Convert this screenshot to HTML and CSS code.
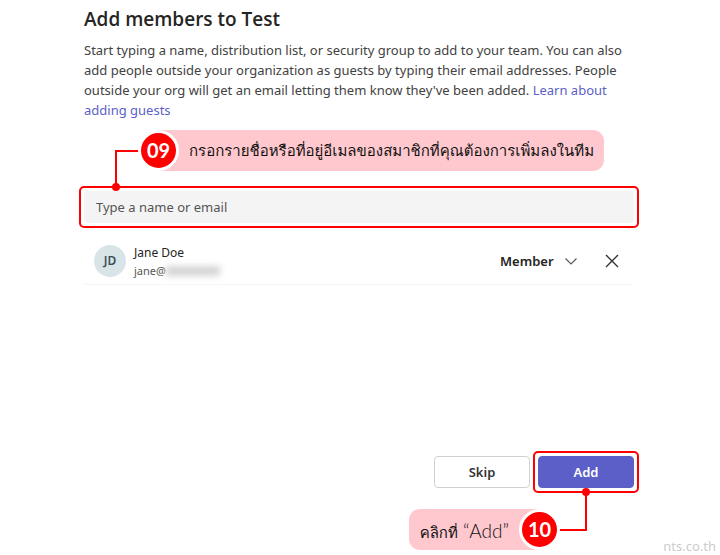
FILE: index.html
```
<!DOCTYPE html>
<html lang="en">
<head>
    <meta charset="UTF-8">
    <meta name="viewport" content="width=device-width, initial-scale=1.0">
    <title>Add members to Test</title>
    <link rel="stylesheet" href="styles.css">
</head>
<body>
    <main class="dialog">
        <h1>Add members to Test</h1>
        <p class="intro">Start typing a name, distribution list, or security group to add to your team. You can also add people outside your organization as guests by typing their email addresses. People outside your org will get an email letting them know they've been added. <a href="#">Learn about adding guests</a></p>

        <!-- Step 09 -->
        <div class="callout callout-search">
            <span class="step">09</span>
            <p class="note" lang="th">กรอกรายชื่อหรือที่อยู่อีเมลของสมาชิกที่คุณต้องการเพิ่มลงในทีม</p>
            <span class="line line-search"></span>
        </div>

        <div class="highlight highlight-search">
            <input type="text" class="search" placeholder="Type a name or email" aria-label="Type a name or email">
        </div>

        <ul class="members">
            <li class="member">
                <span class="avatar">JD</span>
                <div class="info">
                    <div class="name">Jane Doe</div>
                    <div class="email">jane@<span class="hidden-part"></span></div>
                </div>
                <div class="role">
                    <select class="role-select" aria-label="Role">
                        <option>Member</option>
                        <option>Owner</option>
                    </select>
                    <svg class="chevron" width="14" height="14" viewBox="0 0 14 14" aria-hidden="true">
                        <path d="M1.500 4.500 7 10l5.500-5.500" fill="none" stroke="#555" stroke-width="1.100"/>
                    </svg>
                </div>
                <button type="button" class="remove" aria-label="Remove Jane Doe">
                    <svg width="14" height="14" viewBox="0 0 14 14" aria-hidden="true">
                        <path d="M1 1l12 12M13 1 1 13" fill="none" stroke="#333" stroke-width="1.400"/>
                    </svg>
                </button>
            </li>
        </ul>

        <div class="actions">
            <button type="button" class="btn">Skip</button>
            <div class="highlight">
                <button type="button" class="btn btn-primary">Add</button>
            </div>
        </div>

        <!-- Step 10 -->
        <div class="callout callout-add">
            <p class="note" lang="th">คลิกที่ <span class="quoted">“Add”</span></p>
            <span class="step">10</span>
            <span class="line line-add"></span>
        </div>
    </main>
    <div class="watermark">nts.co.th</div>
</body>
</html>
```
FILE: styles.css
```
* {
    box-sizing: border-box;
}

body {
    margin: 0;
    background: #fff;
    color: #252423;
    font-family: "Noto Sans", "Open Sans", sans-serif;
    font-size: 13px;
}

.dialog {
    display: flex;
    flex-direction: column;
    min-height: 100vh;
    padding: 6px 86px 5px 84px;
}

h1 {
    margin: 0 0 8px;
    font-family: "Open Sans", sans-serif;
    font-size: 19px;
    font-weight: 600;
    line-height: 26px;
}

.intro {
    margin: 0 0 10px;
    color: #424242;
    line-height: 20px;
}

a {
    color: #5b5fc7;
    text-decoration: none;
}

/* Callouts */
.callout {
    position: relative;
    display: flex;
    align-items: center;
    height: 41px;
}

.callout-search {
    align-self: flex-start;
    margin: 0 0 15px 54px;
}

.callout-add {
    align-self: flex-end;
    margin: 16px 74px 0 0;
}

.note {
    height: 41px;
    margin: 0;
    background: #ffc8ce;
    color: #111;
    font-family: "Loma", "Garuda", "Noto Sans Thai Looped", "Noto Serif Thai", sans-serif;
    font-size: 15px;
    line-height: 43px;
    white-space: nowrap;
}

.callout-search .note {
    margin-left: -20px;
    padding: 0 10px 0 30px;
    border-radius: 0 11px 11px 0;
}

.callout-add .note {
    margin-right: -20px;
    padding: 0 30px 0 11px;
    border-radius: 11px 0 0 11px;
}

.quoted {
    font-family: "Lato", sans-serif;
    font-size: 19px;
    font-weight: 300;
}

.step {
    z-index: 1;
    flex: none;
    width: 41px;
    height: 41px;
    border: 3px solid #fff;
    border-radius: 50%;
    background: #f00;
    color: #fff;
    font-family: "Lato", sans-serif;
    font-size: 20px;
    font-weight: 700;
    line-height: 35px;
    text-align: center;
}

.line {
    position: absolute;
    border: 0 solid #f00;
}

.line-search {
    top: 20px;
    left: -23px;
    width: 24px;
    height: 36px;
    border-width: 2px 0 0 2px;
}

.line-add {
    right: -27px;
    bottom: 19px;
    width: 28px;
    height: 39px;
    border-width: 0 2px 2px 0;
}

/* Dot at the end of each line */
.line::after {
    content: "";
    position: absolute;
    width: 8px;
    height: 8px;
    border-radius: 50%;
    background: #f00;
}

.line-search::after {
    bottom: -5px;
    left: -5px;
}

.line-add::after {
    top: -4px;
    right: -5px;
}

.highlight {
    padding: 3px;
    border: 2px solid #f00;
    border-radius: 5px;
}

.highlight-search {
    margin: 0 -5px;
}

.search {
    display: block;
    width: 100%;
    height: 32px;
    padding: 0 12px;
    border: 0;
    border-radius: 4px;
    background: #f4f4f4;
    color: #252423;
    font: inherit;
}

.search::placeholder {
    color: #555;
}

/* Members list */
.members {
    flex: 1;
    margin: 9px 2px 0 0;
    padding: 0;
    list-style: none;
}

.member {
    display: flex;
    align-items: center;
    height: 48px;
    padding: 0 13px 0 10px;
    border-bottom: 1px solid #f5f5f5;
}

.avatar {
    width: 32px;
    height: 32px;
    margin-right: 8px;
    border-radius: 50%;
    background: #d8e4e8;
    color: #3b4f57;
    font-size: 12px;
    font-weight: 600;
    line-height: 32px;
    text-align: center;
}

.info {
    flex: 1;
    padding-top: 3px;
}

.name {
    font-size: 12px;
    line-height: 18px;
}

.email {
    display: flex;
    align-items: center;
    color: #555;
    font-size: 11px;
    line-height: 18px;
}

.hidden-part {
    width: 54px;
    height: 10px;
    background: #d5d5d5;
    filter: blur(3px);
}

.role {
    display: flex;
    align-items: center;
    gap: 10px;
}

.role-select {
    appearance: none;
    padding: 0;
    border: 0;
    background: none;
    color: #252423;
    font: inherit;
    font-weight: 600;
}

.remove {
    display: flex;
    margin-left: 27px;
    padding: 0;
    border: 0;
    background: none;
    cursor: pointer;
}

/* Buttons */
.actions {
    display: flex;
    align-items: center;
    justify-content: flex-end;
    gap: 3px;
    margin-right: -5px;
}

.btn {
    display: block;
    width: 96px;
    height: 32px;
    padding: 0;
    border: 1px solid #d1d1d1;
    border-radius: 4px;
    background: #fff;
    color: #333;
    font: inherit;
    font-weight: 600;
    cursor: pointer;
}

.btn-primary {
    border-color: #5b5fc7;
    background: #5b5fc7;
    color: #fff;
}

.watermark {
    position: absolute;
    right: 4px;
    bottom: 0;
    color: #ccc;
    font-family: "Noto Sans", sans-serif;
    font-size: 13px;
    line-height: 18px;
}
```
